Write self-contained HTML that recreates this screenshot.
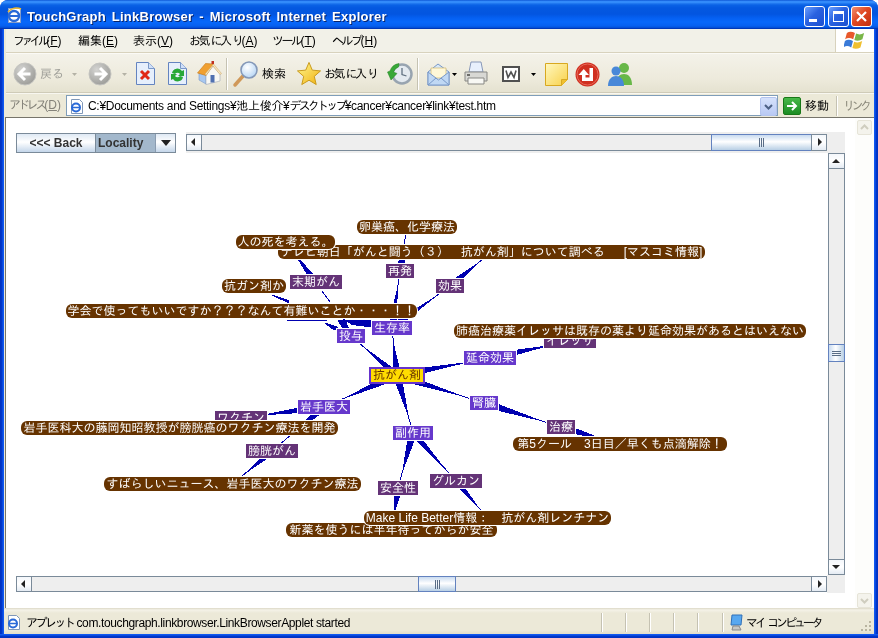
<!DOCTYPE html>
<html lang="ja">
<head>
<meta charset="utf-8">
<title>TouchGraph LinkBrowser - Microsoft Internet Explorer</title>
<style>
*{box-sizing:border-box;margin:0;padding:0}
html,body{width:878px;height:638px;overflow:hidden;background:#fff}
body{position:relative;font-family:"Liberation Sans","IPAGothic",sans-serif;font-size:12px;color:#000}
.abs{position:absolute}
.k{letter-spacing:-2.5px}
#win{position:absolute;left:0;top:0;width:878px;height:638px;background:#0848d8;overflow:hidden;border-radius:8px 8px 0 0;filter:opacity(1)}
#title{position:absolute;left:0;top:0;width:878px;height:29px;
 background:linear-gradient(to bottom,#0a52d0 0px,#2b80f5 1px,#3b95ff 2px,#2078f0 3.5px,#0a62e6 5px,#0458e0 8px,#0355e0 14px,#0560f2 18px,#0868fa 22px,#0660f0 26px,#0450d8 27.5px,#0038b8 28.5px,#0038b8 29px)}
#title .txt{position:absolute;left:27px;top:9px;color:#fff;font-weight:bold;font-size:13px;letter-spacing:0.26px;word-spacing:2px;white-space:nowrap;text-shadow:1px 1px 0 #0a246a}
.cap{position:absolute;top:6px;width:21px;height:21px;border:1px solid #fff;border-radius:3px;
 background:linear-gradient(135deg,#6aa0ff 0%,#2a62e0 45%,#1c4fd0 100%)}
.cap.x{background:linear-gradient(135deg,#f29070 0%,#e04822 45%,#c22e10 100%)}
#menu{position:absolute;left:4px;top:29px;width:870px;height:24px;background:#f2f1e8;border-bottom:1px solid #d8d2bd}
#menu span.m{position:absolute;top:5px;font-size:12px;white-space:nowrap}
#tool{position:absolute;left:4px;top:53px;width:870px;height:40px;background:linear-gradient(to bottom,#f4f2e9,#edeadc 65%,#e5e2d0);border-top:1px solid #fbfaf6;border-bottom:1px solid #cfcbb8}
#addr{position:absolute;left:4px;top:93px;width:870px;height:25px;background:#ece9d8;border-top:1px solid #f8f7f0}
#content{position:absolute;left:5px;top:117px;width:869px;height:491px;background:#fff;border-top:1px solid #76746a;border-left:1px solid #76746a}
#lstrip{position:absolute;left:4px;top:29px;width:2px;height:604px;background:#ece9d8}
#lb{position:absolute;left:0;top:29px;width:4px;height:609px;background:linear-gradient(to right,#0030c0 0,#0038cc 2px,#1058f0 3px,#1058f0 4px)}
#rb{position:absolute;left:874px;top:29px;width:4px;height:609px;background:linear-gradient(to left,#0030c0 0,#0038cc 2px,#1058f0 3px,#1058f0 4px)}
#bb{position:absolute;left:0;top:634px;width:878px;height:4px;background:linear-gradient(to top,#0030c0 0,#0038cc 2px,#1058f0 3px,#1058f0 4px)}
#status{position:absolute;left:4px;top:608px;width:870px;height:26px;background:linear-gradient(to bottom,#dcd8c6 0,#f4f2e8 2px,#ece9d8 5px,#ece9d8 22px,#e2decb 26px)}
.node{position:absolute;color:#fff;white-space:nowrap;text-align:center;font-size:12px;overflow:hidden}
.b{background:#663300;border-radius:6px;box-shadow:0 0 0 1px #fff}
.p1{background:#6638cc;box-shadow:0 0 0 1px #fff}
.p2{background:#663399}
.p3{background:#643377;box-shadow:0 0 0 1px #fff}
.c{background:#ffdd00;border:2px solid #6633cc;color:#663300;line-height:13px}
.c span{display:block;border:0}
.tt{position:absolute;white-space:nowrap;font-size:12px}
.jbtn{position:absolute;border:1px solid #7a8a99;background:linear-gradient(to bottom,#dfe9f4 0%,#ffffff 45%,#c4d6ea 100%);font-weight:bold;color:#333;font-size:12px;text-align:center;white-space:nowrap}
.track{position:absolute;background:#eeeeee;border:1px solid #7a8a99}
.thumbh{position:absolute;border:1px solid #6382bf;background:linear-gradient(to bottom,#c9dbf0 0%,#ffffff 45%,#b8cfe5 100%)}
.thumbv{position:absolute;border:1px solid #6382bf;background:linear-gradient(to right,#c9dbf0 0%,#ffffff 45%,#b8cfe5 100%)}
.sbtn{position:absolute;border:1px solid #7a8a99;background:linear-gradient(to bottom,#f4f7fb,#ffffff 50%,#e4ebf3)}
.sep{position:absolute;top:4px;width:2px;height:32px;border-left:1px solid #c5c2b2;border-right:1px solid #fff}
</style>
</head>
<body>
<div id="win">
<div id="title">
 <svg class="abs" style="left:6px;top:7px" width="17" height="17" viewBox="0 0 17 17"><rect x="2.5" y="1.5" width="12" height="14" fill="#fff" stroke="#8aa0c8"/><circle cx="8" cy="9" r="5" fill="none" stroke="#2a6ad8" stroke-width="2.4"/><path d="M3 9h9" stroke="#2a6ad8" stroke-width="2"/><path d="M2 5c3-4 9-5 13-3" stroke="#e8b830" stroke-width="1.5" fill="none"/></svg>
 <div class="txt">TouchGraph LinkBrowser - Microsoft Internet Explorer</div>
 <div class="cap" style="left:804px"><div class="abs" style="left:4px;top:12px;width:8px;height:3px;background:#fff"></div></div>
 <div class="cap" style="left:828px"><div class="abs" style="left:4px;top:4px;width:11px;height:11px;border:1px solid #fff;border-top-width:3px"></div></div>
 <div class="cap x" style="left:851px"><svg class="abs" style="left:3px;top:3px" width="13" height="13" viewBox="0 0 13 13"><path d="M2 2l9 9M11 2l-9 9" stroke="#fff" stroke-width="2.2"/></svg></div>
</div>
<div id="menu">
 <span class="m" style="left:9px"><span style="letter-spacing:-3.7px">ファイル</span>(<u>F</u>)</span>
 <span class="m" style="left:74px">編集(<u>E</u>)</span>
 <span class="m" style="left:129px">表示(<u>V</u>)</span>
 <span class="m" style="left:185px"><span class="k">お</span>気<span class="k">に</span>入<span class="k">り</span>(<u>A</u>)</span>
 <span class="m" style="left:268px"><span class="k">ツール</span>(<u>T</u>)</span>
 <span class="m" style="left:328px"><span class="k">ヘルプ</span>(<u>H</u>)</span>
 <div class="abs" style="left:831px;top:0;width:39px;height:23px;background:#fff;border-left:1px solid #d8d2bd">
  <svg class="abs" style="left:8px;top:1px" width="23" height="21" viewBox="0 0 20 18"><path d="M2.500 2.500c2-1.500 4.500-1.500 7 0l-1.500 5.500c-2.500-1.500-5-1.500-7 0z" fill="#e8592c"/><path d="M10.500 3c2 1 4.500 1 7-.5l-1.500 5.500c-2.500 1.500-5 1.500-7 .5z" fill="#7ab648"/><path d="M.800 9.500c2-1.500 4.500-1.500 7 0l-1.500 5.500c-2.500-1.500-5-1.500-7 0z" fill="#3a7ad8"/><path d="M8.800 10c2 1 4.500 1 7-.5l-1.500 5.500c-2.500 1.500-5 1.500-7 .5z" fill="#f0c030"/></svg>
 </div>
</div>
<div id="tool">
 <svg class="abs" style="left:9px;top:8px" width="24" height="24" viewBox="0 0 24 24"><defs><radialGradient id="gg" cx="35%" cy="30%" r="75%"><stop offset="0" stop-color="#d4d4d2"/><stop offset="1" stop-color="#9c9c98"/></radialGradient></defs><circle cx="12" cy="12" r="11" fill="url(#gg)" stroke="#c4c4c0"/><path d="M12 6l-6 6 6 6M6.500 12h11" fill="none" stroke="#fff" stroke-width="3" stroke-linejoin="miter"/></svg>
 <span class="tt" style="left:36px;top:13px;color:#a0a09a">戻<span class="k">る</span></span>
 <svg class="abs" style="left:68px;top:19px" width="5" height="3" viewBox="0 0 5 3"><path d="M0 0h5l-2.500 3z" fill="#b4b2a6"/></svg>
 <svg class="abs" style="left:84px;top:8px" width="24" height="24" viewBox="0 0 24 24"><circle cx="12" cy="12" r="11" fill="url(#gg)" stroke="#c4c4c0"/><path d="M12 6l6 6-6 6M17.500 12h-11" fill="none" stroke="#fff" stroke-width="3"/></svg>
 <svg class="abs" style="left:118px;top:19px" width="5" height="3" viewBox="0 0 5 3"><path d="M0 0h5l-2.500 3z" fill="#b4b2a6"/></svg>
 <svg class="abs" style="left:131px;top:7px" width="22" height="26" viewBox="0 0 22 26"><path d="M1.500 1.500h12l6 6v16h-18z" fill="#e6effc" stroke="#6484c0"/><path d="M13.500 1.500v6h6" fill="#d0e0f8" stroke="#7a98c8"/><path d="M6 10l8 8M14 10l-8 8" stroke="#e02818" stroke-width="3"/></svg>
 <svg class="abs" style="left:163px;top:7px" width="22" height="26" viewBox="0 0 22 26"><path d="M1.500 1.500h12l6 6v16h-18z" fill="#e6effc" stroke="#6484c0"/><path d="M13.500 1.500v6h6" fill="#d0e0f8" stroke="#7a98c8"/><path d="M5 12a5.500 5.500 0 0 1 10-2l2-1v6h-6l2-2a3 3 0 0 0-5 0z" fill="#28a838"/><path d="M16 16a5.500 5.500 0 0 1-10 2l-2 1v-6h6l-2 2a3 3 0 0 0 5 0z" fill="#28a838"/></svg>
 <svg class="abs" style="left:193px;top:7px" width="25" height="25" viewBox="0 0 25 25"><path d="M2 12l7 2v9l-7-4z" fill="#a8c8f0" stroke="#7898c8" stroke-width=".6"/><path d="M9 14l7-9 7 8v7l-14 3.500z" fill="#f8f8f4" stroke="#a0a8b8" stroke-width=".6"/><path d="M.500 12l8-9.500 8 .500-7.500 11.500z" fill="#f0a030" stroke="#c87818" stroke-width=".6"/><path d="M16.500 3l8 9.500-1.500 1-7-8.500-7 9.500-1-1.500z" fill="#f8e8c0" stroke="#c8a060" stroke-width=".5"/><rect x="13.500" y="14" width="4" height="7.500" fill="#5070b0"/><rect x="14.500" y="0" width="2.500" height="3" fill="#c03020"/></svg>
 <div class="sep" style="left:222px"></div>
 <svg class="abs" style="left:228px;top:6px" width="28" height="28" viewBox="0 0 28 28"><defs><radialGradient id="lg" cx="40%" cy="35%" r="70%"><stop offset="0" stop-color="#ffffff"/><stop offset="1" stop-color="#b4d4f4"/></radialGradient></defs><path d="M11 16l-8 9" stroke="#d09858" stroke-width="3.500" stroke-linecap="round"/><circle cx="17" cy="10" r="8" fill="url(#lg)" stroke="#8498b8" stroke-width="1.600"/></svg>
 <span class="tt" style="left:258px;top:13px">検索</span>
 <svg class="abs" style="left:292px;top:7px" width="26" height="25" viewBox="0 0 26 26"><defs><linearGradient id="sg" x1="0" y1="0" x2="1" y2="1"><stop offset="0" stop-color="#fff890"/><stop offset="1" stop-color="#f0b010"/></linearGradient></defs><path d="M13 1.500l3.400 8 8.600.800-6.500 5.700 2 8.500-7.500-4.500-7.500 4.500 2-8.500-6.500-5.700 8.600-.800z" fill="url(#sg)" stroke="#c89818" stroke-width="1"/></svg>
 <span class="tt" style="left:320px;top:13px"><span class="k">お</span>気<span class="k">に</span>入<span class="k">り</span></span>
 <svg class="abs" style="left:383px;top:7px" width="26" height="26" viewBox="0 0 26 26"><circle cx="15" cy="13" r="9.500" fill="#e4eaf0" stroke="#98a4b0" stroke-width="2.500"/><path d="M15 7v6.500l4.500 1.500" stroke="#607080" stroke-width="1.300" fill="none"/><path d="M3 10a11 11 0 0 1 9-7.500l-.500 3.500a8 8 0 0 0-5 5l3.500 1.500-6 6.500-3.500-8z" fill="#38a838" stroke="#208020" stroke-width=".5"/></svg>
 <div class="sep" style="left:413px"></div>
 <svg class="abs" style="left:422px;top:8px" width="25" height="25" viewBox="0 0 25 25"><path d="M2 10l10-8 11 8v13h-21z" fill="#d8e8f8" stroke="#7898c8"/><path d="M5 6h15v10h-15z" fill="#fff8d8" stroke="#d0b870" stroke-width=".7"/><path d="M2 10l10.500 8 10.500-8v13h-21z" fill="#c0d8f4" stroke="#7898c8"/><path d="M2 23l8-7M23 23l-8-7" stroke="#7898c8"/></svg>
 <svg class="abs" style="left:448px;top:19px" width="5" height="3" viewBox="0 0 5 3"><path d="M0 0h5l-2.500 3z" fill="#000"/></svg>
 <svg class="abs" style="left:459px;top:7px" width="26" height="26" viewBox="0 0 26 26"><path d="M8 1h10l2 10h-14z" fill="#e8f0fc" stroke="#8898b8"/><path d="M2 11h22v9h-22z" fill="#d8d8d4" stroke="#888884"/><path d="M5 17h16v6h-16z" fill="#f8f8f4" stroke="#888884"/><path d="M4 14h3" stroke="#484844" stroke-width="1.500"/></svg>
 <svg class="abs" style="left:498px;top:12px" width="18" height="16" viewBox="0 0 18 16"><rect x="1" y="1" width="16" height="14" fill="#fff" stroke="#505050" stroke-width="2"/><path d="M4 4.500l2 7 3-5.500 3 5.500 2-7" fill="none" stroke="#505050" stroke-width="1.600"/></svg>
 <svg class="abs" style="left:527px;top:19px" width="5" height="3" viewBox="0 0 5 3"><path d="M0 0h5l-2.500 3z" fill="#000"/></svg>
 <svg class="abs" style="left:541px;top:9px" width="23" height="23" viewBox="0 0 23 23"><defs><linearGradient id="ng" x1="0" y1="0" x2="1" y2="1"><stop offset="0" stop-color="#fff8c0"/><stop offset="1" stop-color="#f8d048"/></linearGradient></defs><path d="M.500.500h22v16l-6 6h-16z" fill="url(#ng)" stroke="#d8a820"/><path d="M22.500 16.500h-6v6" fill="#f0c030" stroke="#d8a820"/></svg>
 <svg class="abs" style="left:571px;top:8px" width="25" height="25" viewBox="0 0 25 25"><circle cx="12.500" cy="12.500" r="12" fill="#d03020"/><circle cx="12.500" cy="12.500" r="10.500" fill="none" stroke="#e86858" stroke-width="1"/><path d="M7 12.500h3.500v3h4v-9.500h3.500v13h-11z" fill="#fff"/><path d="M3.500 13l5.250-6 5.250 6z" fill="#fff"/></svg>
 <svg class="abs" style="left:603px;top:7px" width="27" height="26" viewBox="0 0 27 26"><circle cx="17" cy="7" r="5" fill="#68b848"/><path d="M9 24c0-8 4-11 8-11s8 3 8 11z" fill="#68b848"/><circle cx="9" cy="10" r="4.500" fill="#4888d8"/><path d="M1 25c0-7 4-10 8-10s8 3 8 10z" fill="#4888d8"/></svg>
</div>
<div id="addr">
 <span class="tt" style="left:5px;top:4px;color:#85837a"><span style="letter-spacing:-3.2px">アドレス</span>(<u>D</u>)</span>
 <div class="abs" style="left:62px;top:1px;width:712px;height:21px;background:#fff;border:1px solid #7f9db9"></div>
 <svg class="abs" style="left:65px;top:4px" width="16" height="17" viewBox="0 0 16 17"><path d="M2.500 1.500h8l3 3v11h-11z" fill="#fff" stroke="#8098b8"/><circle cx="7" cy="9.500" r="4" fill="none" stroke="#2a6ad8" stroke-width="2"/><path d="M3 9.500h7" stroke="#2a6ad8" stroke-width="1.600"/></svg>
 <span class="tt" style="left:84px;top:5px;letter-spacing:-.3px">C:¥Documents and Settings¥池上俊介¥<span style="letter-spacing:-2.8px">デスクトップ</span>¥cancer¥cancer¥link¥test.htm</span>
 <div class="abs" style="left:756px;top:3px;width:17px;height:19px;background:linear-gradient(#d6e2fb,#b9c9f4);border:1px solid #b4c4ee;border-radius:2px"><svg class="abs" style="left:3px;top:6px" width="9" height="6" viewBox="0 0 9 6"><path d="M1 1l3.500 3.500 3.500-3.500" stroke="#4d6185" stroke-width="2" fill="none"/></svg></div>
 <div class="abs" style="left:779px;top:3px;width:18px;height:18px;background:linear-gradient(#48b848,#1c8c24);border:1px solid #187818;border-radius:2px"><svg class="abs" style="left:2px;top:2px" width="12" height="12" viewBox="0 0 12 12"><path d="M1 6h9M6 2l4 4-4 4" stroke="#fff" stroke-width="2" fill="none"/></svg></div>
 <span class="tt" style="left:801px;top:5px">移動</span>
 <div class="abs" style="left:832px;top:2px;width:2px;height:20px;border-left:1px solid #c5c2b2;border-right:1px solid #fff"></div>
 <span class="tt" style="left:839px;top:5px;color:#8c8a7c"><span style="letter-spacing:-3.5px">リンク</span></span>
</div>
<div id="lstrip"></div><div id="lb"></div><div id="rb"></div><div id="bb"></div>
<div id="content"></div>

<div class="abs" style="left:855px;top:118px;width:19px;height:490px;background:#fdfdfb"></div>
<div class="abs" style="left:857px;top:120px;width:15px;height:15px;background:#f4f3ec;border:1px solid #e6e4d8;border-radius:2px"><svg class="abs" style="left:2px;top:3px" width="9" height="6" viewBox="0 0 9 6"><path d="M1 5l3.500-3.500 3.500 3.500" stroke="#cfcdbf" stroke-width="2" fill="none"/></svg></div>
<div class="abs" style="left:857px;top:593px;width:15px;height:15px;background:#f4f3ec;border:1px solid #e6e4d8;border-radius:2px"><svg class="abs" style="left:2px;top:4px" width="9" height="6" viewBox="0 0 9 6"><path d="M1 1l3.500 3.500 3.500-3.500" stroke="#cfcdbf" stroke-width="2" fill="none"/></svg></div>


<div class="abs" style="left:176px;top:132px;width:669px;height:21px;background:#eeeeee"></div>
<div class="abs" style="left:176px;top:132px;width:10px;height:21px;background:#fff"></div>
<div class="jbtn" style="left:16px;top:133px;width:80px;height:20px;line-height:19px;font-size:12px">&lt;&lt;&lt; Back</div>
<div class="abs" style="left:95px;top:133px;width:81px;height:20px;border:1px solid #7a8a99;background:linear-gradient(to bottom,#dfe9f4 0%,#ffffff 45%,#c4d6ea 100%)"></div>
<div class="abs" style="left:96px;top:134px;width:60px;height:18px;background:#a3b8cc;border-right:1px solid #8a9cb0;font-weight:bold;color:#333;font-size:12px;line-height:18px;padding-left:2px">Locality</div>
<svg class="abs" style="left:161px;top:140px" width="10" height="6" viewBox="0 0 10 6"><path d="M0 0h10l-5 6z" fill="#222"/></svg>
<div class="track" style="left:186px;top:134px;width:641px;height:17px"></div>
<div class="sbtn" style="left:186px;top:134px;width:16px;height:17px"></div><svg class="abs" style="left:191px;top:138px" width="4" height="8" viewBox="0 0 4 8"><path d="M0 4l4-4v8z" fill="#222"/></svg>
<div class="thumbh" style="left:711px;top:134px;width:101px;height:17px"></div><div class="abs" style="left:759px;top:138px;width:1px;height:9px;background:#5a6d86"></div><div class="abs" style="left:761px;top:138px;width:1px;height:9px;background:#5a6d86"></div><div class="abs" style="left:763px;top:138px;width:1px;height:9px;background:#5a6d86"></div>
<div class="sbtn" style="left:811px;top:134px;width:16px;height:17px"></div><svg class="abs" style="left:818px;top:138px" width="4" height="8" viewBox="0 0 4 8"><path d="M4 4l-4-4v8z" fill="#222"/></svg>
<div class="track" style="left:828px;top:153px;width:17px;height:422px"></div>
<div class="sbtn" style="left:828px;top:153px;width:17px;height:16px"></div><svg class="abs" style="left:832px;top:159px" width="8" height="4" viewBox="0 0 8 4"><path d="M4 0l4 4h-8z" fill="#222"/></svg>
<div class="thumbv" style="left:828px;top:344px;width:17px;height:18px"></div><div class="abs" style="left:832px;top:351px;width:9px;height:1px;background:#5a6d86"></div><div class="abs" style="left:832px;top:353px;width:9px;height:1px;background:#5a6d86"></div><div class="abs" style="left:832px;top:355px;width:9px;height:1px;background:#5a6d86"></div>
<div class="sbtn" style="left:828px;top:559px;width:17px;height:16px"></div><svg class="abs" style="left:832px;top:565px" width="8" height="4" viewBox="0 0 8 4"><path d="M4 4l4-4h-8z" fill="#222"/></svg>
<div class="abs" style="left:827px;top:575px;width:18px;height:18px;background:#eeeeee"></div>
<div class="track" style="left:16px;top:576px;width:811px;height:16px"></div>
<div class="sbtn" style="left:16px;top:576px;width:16px;height:16px"></div><svg class="abs" style="left:21px;top:580px" width="4" height="8" viewBox="0 0 4 8"><path d="M0 4l4-4v8z" fill="#222"/></svg>
<div class="thumbh" style="left:418px;top:576px;width:38px;height:16px"></div><div class="abs" style="left:435px;top:580px;width:1px;height:9px;background:#5a6d86"></div><div class="abs" style="left:437px;top:580px;width:1px;height:9px;background:#5a6d86"></div><div class="abs" style="left:439px;top:580px;width:1px;height:9px;background:#5a6d86"></div>
<div class="sbtn" style="left:811px;top:576px;width:16px;height:16px"></div><svg class="abs" style="left:818px;top:580px" width="4" height="8" viewBox="0 0 4 8"><path d="M4 4l-4-4v8z" fill="#222"/></svg>

<svg class="abs" style="left:0;top:0" width="878" height="638" viewBox="0 0 878 638" shape-rendering="crispEdges"><g fill="#0000b0" stroke="#0000b0" stroke-width="1">
<polygon points="393.0,375.5 393.8,345.5 401.0,375.5 397.0,379.5"/><line x1="393.8" y1="345.5" x2="392.0" y2="328.0"/>
<polygon points="366.3,349.1 397.0,371.5 401.0,375.5 397.0,379.5"/><line x1="366.3" y1="349.1" x2="351.0" y2="336.0"/>
<polygon points="393.0,375.5 397.0,371.5 463.5,363.0 397.0,379.5"/><line x1="463.5" y1="363.0" x2="490.0" y2="358.0"/>
<polygon points="393.0,375.5 397.0,371.5 459.0,395.1 397.0,379.5"/><line x1="459.0" y1="395.1" x2="484.0" y2="403.0"/>
<polygon points="345.9,397.5 397.0,371.5 401.0,375.5 397.0,379.5"/><line x1="345.9" y1="397.5" x2="324.0" y2="407.0"/>
<polygon points="393.0,375.5 397.0,371.5 401.0,375.5 407.7,413.8"/><line x1="407.7" y1="413.8" x2="413.0" y2="433.0"/>
<polygon points="388.0,328.0 397.3,290.3 396.0,328.0 392.0,332.0"/><line x1="397.3" y1="290.3" x2="400.0" y2="271.0"/>
<polygon points="396.0,271.0 404.3,243.7 404.0,271.0 400.0,275.0"/><line x1="404.3" y1="243.7" x2="407.0" y2="227.0"/>
<polygon points="388.0,328.0 392.0,324.0 431.9,299.1 392.0,332.0"/><line x1="431.9" y1="299.1" x2="450.0" y2="286.0"/>
<polygon points="446.0,286.0 450.0,282.0 477.0,263.9 450.0,290.0"/><line x1="477.0" y1="263.9" x2="491.5" y2="252.0"/>
<polygon points="296.5,256.4 320.0,282.0 316.0,286.0 312.0,282.0"/><line x1="296.5" y1="256.4" x2="285.5" y2="242.0"/>
<polygon points="486.0,358.0 490.0,354.0 546.2,346.1 490.0,362.0"/><line x1="546.2" y1="346.1" x2="570.0" y2="341.0"/>
<polygon points="566.0,341.0 570.0,337.0 610.1,334.3 570.0,345.0"/><line x1="610.1" y1="334.3" x2="630.0" y2="331.0"/>
<polygon points="480.0,403.0 484.0,399.0 538.0,419.8 484.0,407.0"/><line x1="538.0" y1="419.8" x2="561.0" y2="427.0"/>
<polygon points="557.0,427.0 561.0,423.0 600.5,438.4 561.0,431.0"/><line x1="600.5" y1="438.4" x2="620.0" y2="444.0"/>
<polygon points="265.5,414.7 324.0,403.0 328.0,407.0 324.0,411.0"/><line x1="265.5" y1="414.7" x2="241.0" y2="418.0"/>
<polygon points="288.5,437.0 324.0,403.0 328.0,407.0 324.0,411.0"/><line x1="288.5" y1="437.0" x2="272.0" y2="451.0"/>
<polygon points="199.7,424.7 241.0,414.0 245.0,418.0 241.0,422.0"/><line x1="199.7" y1="424.7" x2="179.5" y2="428.0"/>
<polygon points="246.5,472.3 272.0,447.0 276.0,451.0 272.0,455.0"/><line x1="246.5" y1="472.3" x2="232.5" y2="484.0"/>
<polygon points="409.0,433.0 413.0,429.0 417.0,433.0 442.1,465.4 413.0,437.0"/><line x1="442.1" y1="465.4" x2="456.0" y2="481.0"/>
<polygon points="403.1,469.3 409.0,433.0 413.0,429.0 417.0,433.0"/><line x1="403.1" y1="469.3" x2="398.0" y2="488.0"/>
<polygon points="452.0,481.0 456.0,477.0 460.0,481.0 476.0,504.5 456.0,485.0"/><line x1="476.0" y1="504.5" x2="487.5" y2="518.0"/>
<polygon points="394.0,488.0 398.0,484.0 402.0,488.0 394.0,513.7"/><line x1="394.0" y1="513.7" x2="391.5" y2="530.0"/>
<line x1="287" y1="320.5" x2="327" y2="320.5"/>
<polygon points="345,320 372,321 372,327 352,324.5"/>
<polygon points="338,320 345,320 348,327 342,327"/>
<polygon points="325,323 337,327 337,329.5 333,329"/>
<polygon points="272,295 288,300.5 288,302.5"/>
<line x1="322" y1="291" x2="330" y2="302"/>
</g></svg>
<div class="node c" style="left:369px;top:367px;width:56px;height:17px"><span>抗がん剤</span></div>
<div class="node p3" style="left:386px;top:264px;width:28px;height:14px;line-height:14px">再発</div>
<div class="node p3" style="left:436px;top:279px;width:28px;height:14px;line-height:14px">効果</div>
<div class="node p3" style="left:290px;top:275px;width:52px;height:14px;line-height:14px">末期がん</div>
<div class="node p1" style="left:372px;top:321px;width:40px;height:14px;line-height:14px">生存率</div>
<div class="node p1" style="left:337px;top:329px;width:28px;height:14px;line-height:14px">投与</div>
<div class="node p3" style="left:544px;top:334px;width:52px;height:14px;line-height:14px">イレッサ</div>
<div class="node p1" style="left:464px;top:351px;width:52px;height:14px;line-height:14px">延命効果</div>
<div class="node p1" style="left:470px;top:396px;width:28px;height:14px;line-height:14px">腎臓</div>
<div class="node p1" style="left:298px;top:400px;width:52px;height:14px;line-height:14px">岩手医大</div>
<div class="node p3" style="left:215px;top:411px;width:52px;height:14px;line-height:14px">ワクチン</div>
<div class="node p3" style="left:547px;top:420px;width:28px;height:14px;line-height:14px">治療</div>
<div class="node p1" style="left:393px;top:426px;width:40px;height:14px;line-height:14px">副作用</div>
<div class="node p3" style="left:246px;top:444px;width:52px;height:14px;line-height:14px">膀胱がん</div>
<div class="node p3" style="left:430px;top:474px;width:52px;height:14px;line-height:14px">グルカン</div>
<div class="node p3" style="left:378px;top:481px;width:40px;height:14px;line-height:14px">安全性</div>
<div class="node b" style="left:357px;top:220px;width:100px;height:14px;line-height:14px">卵巣癌、化学療法</div>
<div class="node b" style="left:278px;top:245px;width:427px;height:14px;line-height:14px">テレビ朝日「がんと闘う（３）　抗がん剤」について調べる　<span style="margin-left:7px">[</span>マスコミ情報]</div>
<div class="node b" style="left:236px;top:235px;width:99px;height:14px;line-height:14px">人の死を考える。</div>
<div class="node b" style="left:222px;top:279px;width:64px;height:14px;line-height:14px">抗ガン剤か</div>
<div class="node b" style="left:66px;top:304px;width:351px;height:14px;line-height:14px">学会で使ってもいいですか？？？なんて有難いことか・・・！！</div>
<div class="node b" style="left:454px;top:324px;width:352px;height:14px;line-height:14px">肺癌治療薬イレッサは既存の薬より延命効果があるとはいえない</div>
<div class="node b" style="left:21px;top:421px;width:317px;height:14px;line-height:14px">岩手医科大の藤岡知昭教授が膀胱癌のワクチン療法を開発</div>
<div class="node b" style="left:513px;top:437px;width:214px;height:14px;line-height:14px">第5クール　3日目／早くも点滴解除！</div>
<div class="node b" style="left:104px;top:477px;width:257px;height:14px;line-height:14px">すばらしいニュース、岩手医大のワクチン療法</div>
<div class="node b" style="left:286px;top:523px;width:211px;height:14px;line-height:14px">新薬を使うには半年待ってからが安全</div>
<div class="node b" style="left:364px;top:511px;width:247px;height:14px;line-height:14px">Make Life Better情報：　抗がん剤レンチナン</div>
<div id="status">
 <svg class="abs" style="left:2px;top:6px" width="16" height="17" viewBox="0 0 16 17"><path d="M2.500 1.500h8l3 3v11h-11z" fill="#fff" stroke="#8098b8"/><circle cx="7" cy="9.500" r="4" fill="none" stroke="#2a6ad8" stroke-width="2"/><path d="M3 9.500h7" stroke="#2a6ad8" stroke-width="1.600"/></svg>
 <span class="tt" style="left:22px;top:8px;letter-spacing:-.37px"><span class="k">アプレット</span> com.touchgraph.linkbrowser.LinkBrowserApplet started</span>
 <div class="abs" style="left:597px;top:5px;width:2px;height:19px;border-left:1px solid #c5c2b2;border-right:1px solid #fff"></div><div class="abs" style="left:621px;top:5px;width:2px;height:19px;border-left:1px solid #c5c2b2;border-right:1px solid #fff"></div><div class="abs" style="left:645px;top:5px;width:2px;height:19px;border-left:1px solid #c5c2b2;border-right:1px solid #fff"></div><div class="abs" style="left:669px;top:5px;width:2px;height:19px;border-left:1px solid #c5c2b2;border-right:1px solid #fff"></div><div class="abs" style="left:693px;top:5px;width:2px;height:19px;border-left:1px solid #c5c2b2;border-right:1px solid #fff"></div><div class="abs" style="left:718px;top:5px;width:2px;height:19px;border-left:1px solid #c5c2b2;border-right:1px solid #fff"></div>
 <svg class="abs" style="left:725px;top:6px" width="15" height="17" viewBox="0 0 15 17"><path d="M3 1h10l-1 10h-10z" fill="#58a8f0" stroke="#3070b8"/><path d="M4 12h6l2 4h-9z" fill="#c8c8c4" stroke="#888"/></svg>
 <span class="tt" style="left:742px;top:8px"><span style="letter-spacing:-3.1px">マイ</span> <span style="letter-spacing:-3.1px">コンピュータ</span></span>
 <svg class="abs" style="left:856px;top:12px" width="12" height="12" viewBox="0 0 12 12"><g fill="#b8b4a0"><rect x="9" y="1" width="2" height="2"/><rect x="5" y="5" width="2" height="2"/><rect x="9" y="5" width="2" height="2"/><rect x="1" y="9" width="2" height="2"/><rect x="5" y="9" width="2" height="2"/><rect x="9" y="9" width="2" height="2"/></g></svg>
</div>
</div>
</body>
</html>
